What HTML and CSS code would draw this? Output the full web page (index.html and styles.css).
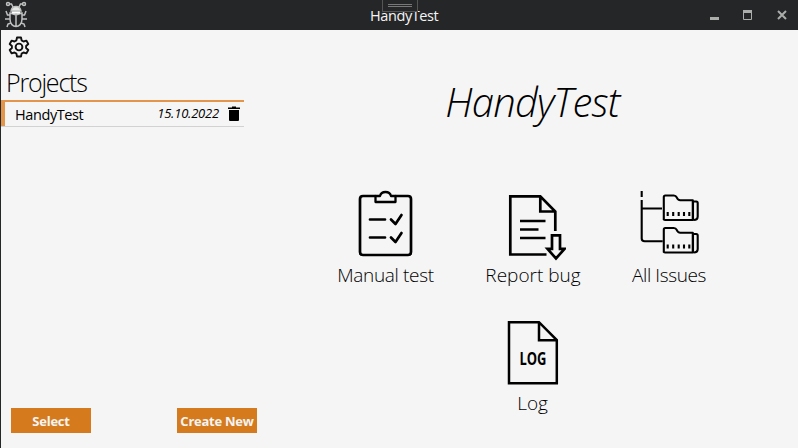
FILE: index.html
```html
<!DOCTYPE html>
<html lang="en">
<head>
<meta charset="utf-8">
<title>HandyTest</title>
<link rel="stylesheet" href="styles.css">
</head>
<body>
<div class="window">
  <header class="titlebar">
    <svg class="logo" width="24" height="28" viewBox="0 0 24 28" fill="none" stroke="#bfc1c1" stroke-width="1.500">
      <path d="M8 6 6.500 3H4M14 6l1.500-3H18M5 14H2.500L1 10M5 18H0M6 22l-3 1-1 3M17 14h2.500L21 10M17 18h5M16 22l3 1 1 3"/>
      <circle cx="3" cy="3" r="1.500"/><circle cx="19" cy="3" r="1.500"/>
      <path d="M6 10C7 4 15 4 16 10Z" fill="#e5e5e5"/>
      <path d="M5 12h12v6c0 5-3 7.500-6 7.500S5 23 5 18ZM5 12l6 2 6-2M11 14v11"/>
      <path d="M7 11.500h8" stroke="#fff" stroke-width="2"/>
    </svg>
    <span class="caption">HandyTest</span>
    <span class="grip"><i></i><i></i></span>
    <svg class="controls" width="78" height="12" viewBox="0 0 78 12" fill="none" stroke="#aaadaa">
      <path d="M0 9.500h9" stroke-width="3"/>
      <path d="M33.500 2v8.500h8V2"/><path d="M33 2.500h9" stroke-width="3"/>
      <path d="m68 2 8 8M76 2l-8 8" stroke-width="2"/>
    </svg>
  </header>
  <div class="body">
    <aside class="sidebar">
      <svg class="gear" width="22" height="22" viewBox="0 0 22 22" fill="none" stroke="#111" stroke-width="1.900" stroke-linejoin="round">
        <path d="M9 1.500h4l.6 2.900 1.900 1.100 2.800-.9 2 3.400L18.100 10v2l2.200 2-2 3.400-2.800-.9-1.900 1.100-.6 2.900H9l-.6-2.900-1.900-1.100-2.800.9-2-3.400 2.200-2v-2l-2.200-2 2-3.400 2.800.9 1.900-1.100Z"/>
        <circle cx="11" cy="11" r="3.400"/>
      </svg>
      <h2 class="heading">Projects</h2>
      <div class="project">
        <span class="name">HandyTest</span>
        <span class="date">15.10.2022</span>
        <svg class="trash" width="12" height="16" viewBox="0 0 12 16"><path d="M4 .5h4v1h4v1.500H0V1.500h4ZM1 4h10v10q0 1-1 1H2q-1 0-1-1Z"/></svg>
      </div>
      <div class="actions"><button>Select</button><button>Create New</button></div>
    </aside>
    <main class="main">
      <h1 class="title"><span>HandyTest</span></h1>
      <div class="tiles">
        <div class="tile manual">
          <svg width="60" height="72" viewBox="0 0 60 72" fill="none" stroke="#000" stroke-width="2.700" stroke-linecap="round" stroke-linejoin="round">
            <path d="M19 7H7q-3 0-3 3v53q0 3 3 3h45q3 0 3-3V10q0-3-3-3H40"/>
            <path d="M19.500 7v6h20V7H35q-1-4-5.500-4T24 7Z" stroke-width="2.300"/>
            <path d="M14 30.500h15M14 48.500h15M35 30.500l4.500 4.500 6-9M35 48.500l4.500 4.500 6-9"/>
          </svg>
          <span class="label">Manual test</span>
        </div>
        <div class="tile report">
          <svg width="66" height="72" viewBox="0 0 66 72" fill="none" stroke="#000" stroke-width="2.700">
            <path d="M46.500 65.500H10.300V7.300h30L55.300 22.500V42M40.300 7.300v15.200h15"/>
            <path d="M20 32h25.500M20 40.500h18.500M20 49h25.500"/>
            <path d="M52 46.300h8v13.500h4.500L56 69.500l-8.500-9.700H52Z"/>
          </svg>
          <span class="label">Report bug</span>
        </div>
        <div class="tile issues">
          <svg width="60" height="72" viewBox="0 0 60 72" fill="none" stroke="#000" stroke-width="2.100" stroke-linejoin="round">
            <path d="M2.700 2v6M2.700 11v38.500q0 2.700 3 2.700h18M3 19.500h20"/>
            <g id="folder"><path d="M24.800 31V8q0-1.500 1.500-1.500h8.500q2 0 3 2 1 2.700 3.500 2.700h12.500v19.800H26q-1.200 0-1.200-.7M53.300 12.500h4q1.400 0 1.400 1.500v13.500q0 3.500-4 3.500"/><path d="M54 13v17"/><path d="M28.700 23v4M34.200 23v4M39.700 23v4M45 23v4M50.300 23v4"/></g>
            <use href="#folder" y="32.500"/>
          </svg>
          <span class="label">All Issues</span>
        </div>
      </div>
      <div class="tile log">
        <svg width="60" height="72" viewBox="0 0 60 72">
          <path d="M6 5.200h30L53.800 23v43.300H6ZM36 5.200V23.300H53.800" fill="none" stroke="#000" stroke-width="2.500"/>
          <text class="logtext" x="16.500" y="47.500" textLength="27" lengthAdjust="spacingAndGlyphs">LOG</text>
        </svg>
        <span class="label">Log</span>
      </div>
    </main>
  </div>
</div>
</body>
</html>
```
FILE: styles.css
```css
* { box-sizing: border-box; }
body { margin: 0; font-family: "Open Sans", "Noto Sans", sans-serif; color: #000; overflow: hidden; }
svg { display: block; flex: none; }
.window { width: 798px; height: 448px; background: #f5f5f5; border-left: 1px solid #252628; display: flex; flex-direction: column; }
.titlebar { position: relative; height: 30px; flex: none; background: #252628; display: flex; align-items: center; }
.logo { margin-left: 4px; }
.caption { flex: 1; margin-left: 341px; color: #f5f5f5; font-size: 14.500px; line-height: 20px; padding-top: 1px; letter-spacing: -.4px; }
.controls { margin-right: 10px; }
.grip { position: absolute; left: 381px; top: -1px; width: 36px; height: 13px; border: 1px solid #555; background: #252628; display: flex; flex-direction: column; align-items: center; justify-content: center; gap: 1px; }
.grip i { width: 24px; height: 1px; background: #777; }
.body { flex: 1; display: flex; min-height: 0; }
.sidebar { width: 266px; display: flex; flex-direction: column; }
.gear { margin: 6px 0 0 7px; }
.heading { margin: 6px 0 0 5px; height: 36px; font-size: 25px; font-weight: 300; line-height: 37px; letter-spacing: -1.2px; }
.project { width: 243px; height: 27px; border-top: 2px solid #e3964b; border-bottom: 1px solid #d2d2d2; display: flex; align-items: center; }
.project::before { content: ""; width: 4px; align-self: stretch; background: #e3964b; }
.name { flex: 1; margin-left: 10px; font-size: 14.500px; line-height: 20px; letter-spacing: -.4px; padding-top: 1px; }
.date { font-size: 13px; font-style: italic; margin-right: 9px; letter-spacing: -.2px; line-height: 18px; padding-bottom: 2px; }
.trash { margin-right: 4px; }
.actions { margin-top: auto; padding: 0 10px 15px; display: flex; justify-content: space-between; }
button { width: 80px; height: 25px; padding: 1px 0 0; border: 0; background: #d67b1d; color: #f4f4f4; font: 700 13px/24px "Open Sans", sans-serif; letter-spacing: -.25px; white-space: nowrap; }
.main { flex: 1; display: flex; flex-direction: column; align-items: center; }
.title { margin: 42px 0 0; height: 60px; font-size: 40px; font-weight: 300; font-style: italic; line-height: 60px; letter-spacing: -.75px; }
.tiles { display: flex; width: 370px; margin: 57px 22px 0 0; justify-content: space-between; }
.tile { display: flex; flex-direction: column; align-items: center; height: 101px; }
.label { font-size: 19px; line-height: 26px; font-weight: 300; white-space: nowrap; letter-spacing: -.15px; padding-top: 1px; }
.manual { width: 98px; }
.report { width: 96px; }
.issues { width: 75px; }
.manual .label { letter-spacing: -.35px; }
.report .label { letter-spacing: 0; }
.issues .label { letter-spacing: -.4px; }
.issues svg { margin-right: 1px; }
.log { margin-top: 27px; }
.logtext { font: 700 18px "Open Sans", sans-serif; }
```
